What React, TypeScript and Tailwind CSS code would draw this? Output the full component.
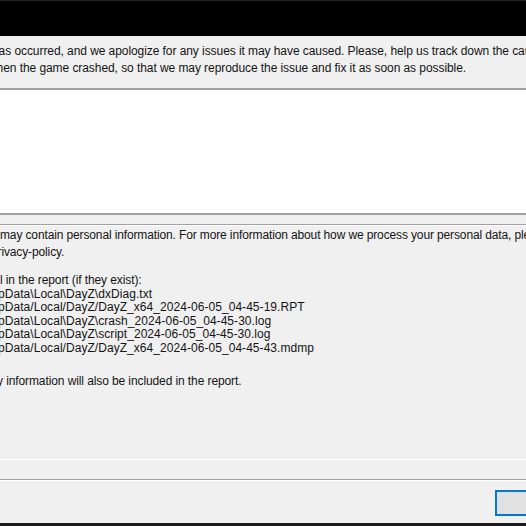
import React from 'react';

const files = [
  'pData\\Local\\DayZ\\dxDiag.txt',
  'pData/Local/DayZ/DayZ_x64_2024-06-05_04-45-19.RPT',
  'pData\\Local\\DayZ\\crash_2024-06-05_04-45-30.log',
  'pData\\Local\\DayZ\\script_2024-06-05_04-45-30.log',
  'pData/Local/DayZ/DayZ_x64_2024-06-05_04-45-43.mdmp',
];

export default function App() {
  return (
    <div
      className="w-[526px] h-[526px] overflow-hidden bg-[#f0f0f0] flex flex-col text-[12px] text-[#141414]"
      style={{ fontFamily: '"Liberation Sans", Arial, sans-serif' }}
    >
      {/* title bar */}
      <div className="h-[36px] shrink-0 bg-black border-t border-[#222]" />

      {/* intro text */}
      <div className="h-[52px] shrink-0 pt-[7px] leading-[17px] whitespace-nowrap overflow-hidden tracking-[-0.07px]">
        <div className="-ml-[8px]">
          has occurred, and we apologize for any issues it may have caused. Please, help us track down the cause
        </div>
        <div className="-ml-[12px]">
          when the game crashed, so that we may reproduce the issue and fix it as soon as possible.
        </div>
      </div>

      {/* description box */}
      <div className="h-[127px] shrink-0 bg-white border-t-2 border-b-2 border-[#a0a0a0]" />

      <div className="h-[9px] shrink-0" />

      {/* info panel */}
      <div className="h-[236px] shrink-0 border-t border-[#a0a0a0] border-b border-b-white whitespace-nowrap overflow-hidden">
        <div className="border-t border-white pt-[1px] leading-[17px] tracking-[-0.13px]">
          <div>may contain personal information. For more information about how we process your personal data, please</div>
          <div className="-ml-[9px]">privacy-policy.</div>
        </div>
        <div className="mt-[13px] leading-[13.6px]">
          <div className="tracking-[-0.1px]">l in the report (if they exist):</div>
          {files.map((f) => (
            <div key={f} className="-ml-[2px] tracking-[0.05px]">
              {f}
            </div>
          ))}
        </div>
        <div className="mt-[16px] -ml-[3px] tracking-[-0.1px]">y information will also be included in the report.</div>
      </div>

      <div className="h-[19px] shrink-0" />

      {/* footer */}
      <div className="flex-1 border-t border-[#a0a0a0] flex justify-end">
        <div className="border-t border-white w-full flex justify-end pt-[9px]">
          <div className="w-[40px] h-[26px] -mr-[9px] bg-[#e1e1e1] border-2 border-[#0078d7]" />
        </div>
      </div>

      <div className="h-[3px] shrink-0 bg-[#1a1a1a]" />
    </div>
  );
}
